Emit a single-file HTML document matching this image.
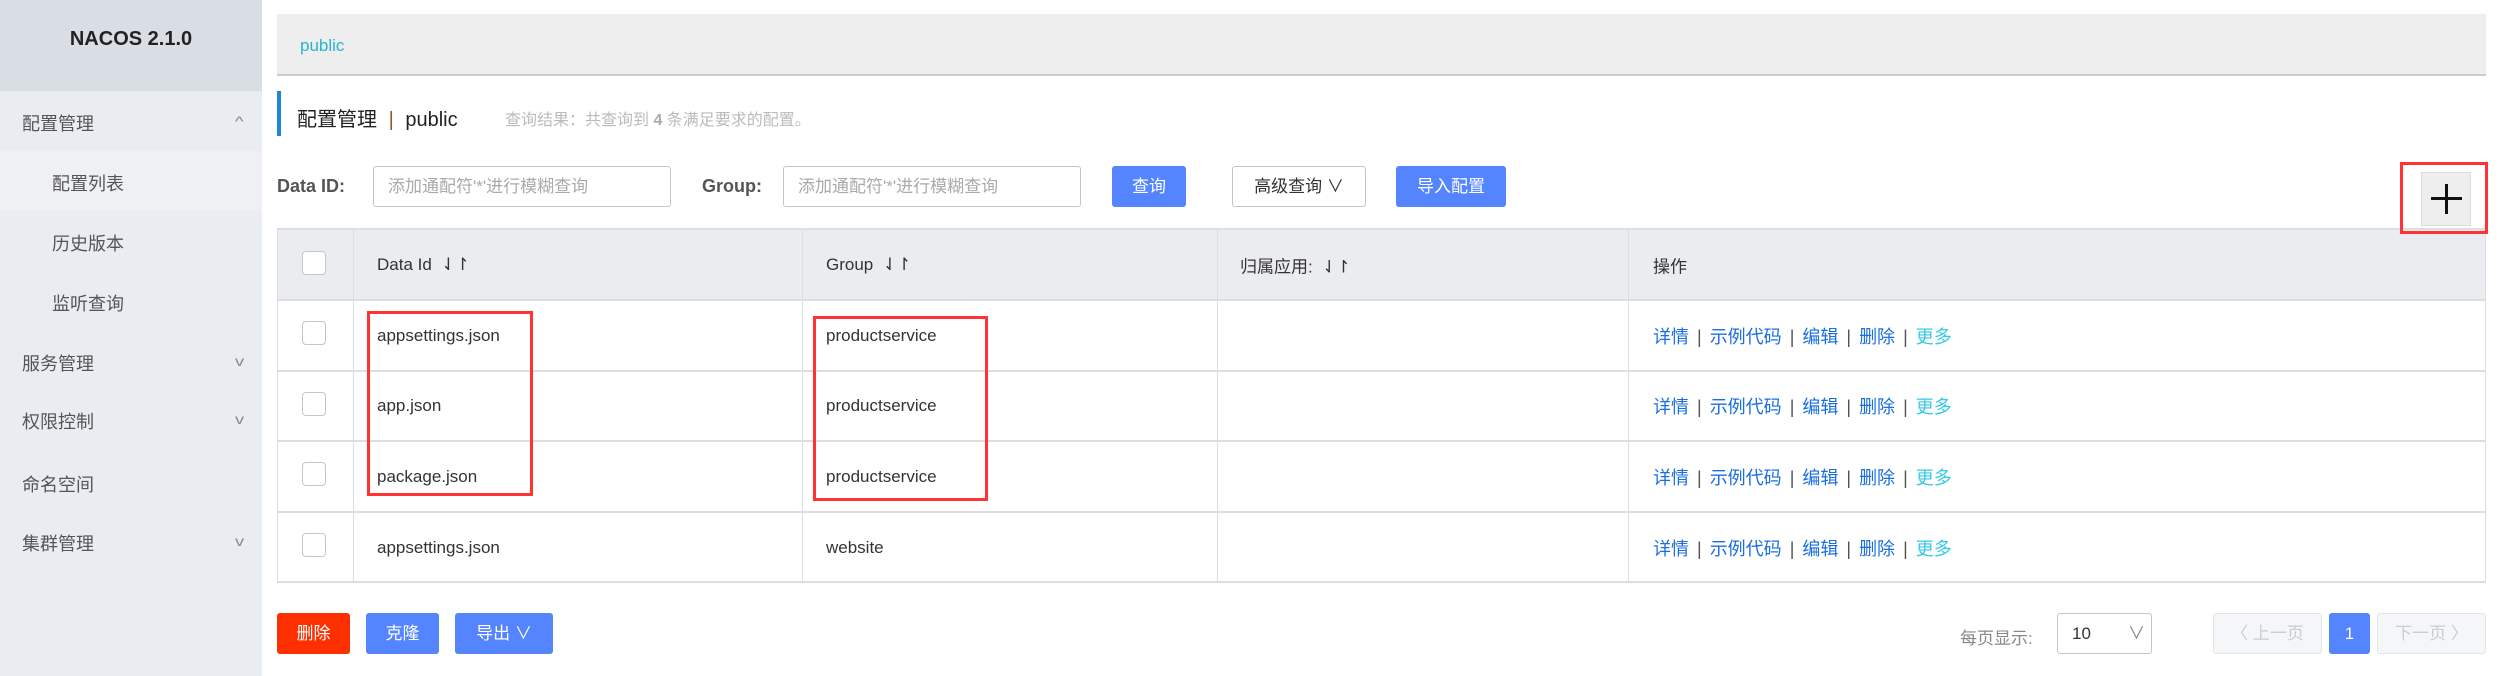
<!DOCTYPE html>
<html><head><meta charset="utf-8"><style>
*{margin:0;padding:0;box-sizing:border-box}
body{width:2502px;height:676px;background:#fff;font-family:"Liberation Sans","Noto Sans CJK SC",sans-serif;position:relative;overflow:hidden;color:#333}
.a{position:absolute;white-space:nowrap}
.side{left:0;top:0;width:262px;height:676px;background:#e9edf2}
.logo{left:0;top:0;width:262px;height:91px;background:#d9dde4;text-align:center;line-height:78px;font-weight:bold;font-size:20px;color:#222}
.mi{left:22px;font-size:18px;color:#555;transform:translateY(-50%)}
.si{left:52px;font-size:18px;color:#555;transform:translateY(-50%)}
.chev{left:236px;font-size:14px;color:#888;transform:translateY(-50%) scaleX(1.3)}
.inp{border:1px solid #c4c6cf;border-radius:3px;height:41px;font-size:17px;color:#aaa;padding-left:14px;line-height:39px}
.btn{border-radius:3px;height:41px;color:#fff;font-size:17px;text-align:center;line-height:41px;background:#5584ff}
.hl{background:#ebecf0}
.vl{width:1px;background:#dcdee3}
.hr{height:2px;background:#dcdee3}
.cb{width:24px;height:24px;border:1px solid #c4c6cf;border-radius:4px;background:#fff}
.t{font-size:17px;color:#333;transform:translateY(-50%)}
.ops{font-size:18px;transform:translateY(-50%);color:#1a6fe0}
.ops b{font-weight:normal;color:#555;margin:0 8px}
.ops i{font-style:normal;color:#35c8e6}
.red{border:3px solid #f33;z-index:5}
</style></head><body>
<div class="a side"></div>
<div class="a logo">NACOS 2.1.0</div>
<div class="a mi" style="top:123px">配置管理</div><div class="a chev" style="top:121px">^</div>
<div class="a" style="left:0;top:151px;width:262px;height:60px;background:#eef0f4"></div>
<div class="a si" style="top:183px">配置列表</div>
<div class="a si" style="top:243px">历史版本</div>
<div class="a si" style="top:303px">监听查询</div>
<div class="a mi" style="top:363px">服务管理</div><div class="a chev" style="top:361px">v</div>
<div class="a mi" style="top:421px">权限控制</div><div class="a chev" style="top:419px">v</div>
<div class="a mi" style="top:484px">命名空间</div>
<div class="a mi" style="top:543px">集群管理</div><div class="a chev" style="top:541px">v</div>

<div class="a" style="left:277px;top:14px;width:2209px;height:62px;background:#eee;border-bottom:2px solid #ccc"></div>
<div class="a" style="left:300px;top:36px;font-size:17px;color:#2bb3d6">public</div>
<div class="a" style="left:277px;top:91px;width:4px;height:45px;background:#1e88d6"></div>
<div class="a" style="left:297px;top:103px;font-size:20px;color:#222">配置管理 <span style="color:#8b5a2b;margin:0 6px">|</span> public</div>
<div class="a" style="left:505px;top:106px;font-size:16px;color:#bbb">查询结果：共查询到 <b style="color:#aaa">4</b> 条满足要求的配置。</div>

<div class="a" style="left:277px;top:176px;font-size:18px;font-weight:bold;color:#555">Data ID:</div>
<div class="a inp" style="left:373px;top:166px;width:298px">添加通配符'*'进行模糊查询</div>
<div class="a" style="left:702px;top:176px;font-size:18px;font-weight:bold;color:#555">Group:</div>
<div class="a inp" style="left:783px;top:166px;width:298px">添加通配符'*'进行模糊查询</div>
<div class="a btn" style="left:1112px;top:166px;width:74px">查询</div>
<div class="a btn" style="left:1232px;top:166px;width:134px;background:#fff;border:1px solid #c4c6cf;color:#333;line-height:39px">高级查询 ∨</div>
<div class="a btn" style="left:1396px;top:166px;width:110px">导入配置</div>

<div class="a hl" style="left:277px;top:229px;width:2209px;height:71px"></div>
<div class="a hr" style="left:277px;top:228px;width:2209px"></div>
<div class="a hr" style="left:277px;top:299px;width:2209px"></div>
<div class="a hr" style="left:277px;top:370px;width:2209px"></div>
<div class="a hr" style="left:277px;top:440px;width:2209px"></div>
<div class="a hr" style="left:277px;top:511px;width:2209px"></div>
<div class="a hr" style="left:277px;top:581px;width:2209px"></div>
<div class="a vl" style="left:277px;top:229px;height:354px"></div>
<div class="a vl" style="left:353px;top:229px;height:354px"></div>
<div class="a vl" style="left:802px;top:229px;height:354px"></div>
<div class="a vl" style="left:1217px;top:229px;height:354px"></div>
<div class="a vl" style="left:1628px;top:229px;height:354px"></div>
<div class="a vl" style="left:2485px;top:229px;height:354px"></div>

<div class="a red" style="left:2400px;top:162px;width:88px;height:72px"></div>
<div class="a" style="left:2421px;top:172px;width:50px;height:54px;background:#eee;border:1px solid #ddd;z-index:6"></div>
<div class="a" style="left:2445px;top:184px;width:3px;height:30px;background:#111;z-index:7"></div>
<div class="a" style="left:2431px;top:197px;width:31px;height:3px;background:#111;z-index:7"></div>

<div class="a cb" style="left:302px;top:251px"></div>
<div class="a t" style="left:377px;top:265px">Data Id &nbsp;⇃↾</div>
<div class="a t" style="left:826px;top:265px">Group &nbsp;⇃↾</div>
<div class="a t" style="left:1240px;top:265px">归属应用: &nbsp;⇃↾</div>
<div class="a t" style="left:1653px;top:265px">操作</div>

<div class="a cb" style="left:302px;top:321px"></div>
<div class="a cb" style="left:302px;top:392px"></div>
<div class="a cb" style="left:302px;top:462px"></div>
<div class="a cb" style="left:302px;top:533px"></div>
<div class="a t" style="left:377px;top:336px">appsettings.json</div>
<div class="a t" style="left:377px;top:406px">app.json</div>
<div class="a t" style="left:377px;top:477px">package.json</div>
<div class="a t" style="left:377px;top:548px">appsettings.json</div>
<div class="a t" style="left:826px;top:336px">productservice</div>
<div class="a t" style="left:826px;top:406px">productservice</div>
<div class="a t" style="left:826px;top:477px">productservice</div>
<div class="a t" style="left:826px;top:548px">website</div>
<div class="a ops" style="left:1653px;top:336px">详情<b>|</b>示例代码<b>|</b>编辑<b>|</b>删除<b>|</b><i>更多</i></div>
<div class="a ops" style="left:1653px;top:406px">详情<b>|</b>示例代码<b>|</b>编辑<b>|</b>删除<b>|</b><i>更多</i></div>
<div class="a ops" style="left:1653px;top:477px">详情<b>|</b>示例代码<b>|</b>编辑<b>|</b>删除<b>|</b><i>更多</i></div>
<div class="a ops" style="left:1653px;top:548px">详情<b>|</b>示例代码<b>|</b>编辑<b>|</b>删除<b>|</b><i>更多</i></div>
<div class="a red" style="left:367px;top:311px;width:166px;height:185px"></div>
<div class="a red" style="left:813px;top:316px;width:175px;height:185px"></div>

<div class="a btn" style="left:277px;top:613px;width:73px;background:#ff3000">删除</div>
<div class="a btn" style="left:366px;top:613px;width:73px">克隆</div>
<div class="a btn" style="left:455px;top:613px;width:98px">导出 ∨</div>
<div class="a" style="left:1960px;top:624px;font-size:17px;color:#888">每页显示:</div>
<div class="a inp" style="left:2057px;top:613px;width:95px;color:#333">10<span style="position:absolute;left:70px;color:#888">∨</span></div>
<div class="a btn" style="left:2213px;top:613px;width:109px;background:#f5f6f8;border:1px solid #e2e4e8;color:#ccc;line-height:39px">〈 上一页</div>
<div class="a btn" style="left:2329px;top:613px;width:41px">1</div>
<div class="a btn" style="left:2377px;top:613px;width:109px;background:#f5f6f8;border:1px solid #e2e4e8;color:#ccc;line-height:39px">下一页 〉</div>
</body></html>
